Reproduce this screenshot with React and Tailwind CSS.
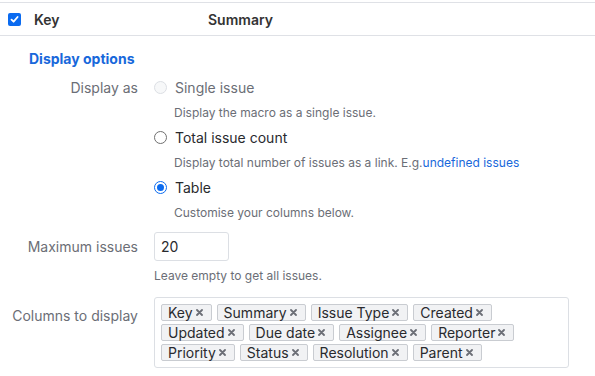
import React from "react";

const X = () => (
  <svg width="7" height="7" viewBox="0 0 7 7" className="ml-[3px] shrink-0">
    <path d="M1 1L6 6M6 1L1 6" stroke="#6b6e76" strokeWidth="1.8" strokeLinecap="round" />
  </svg>
);

const Tag = ({ children }) => (
  <span className="h-[17px] flex items-center pl-[6px] pr-[8px] bg-[#f1f2f4] border border-[#c9ccd1] rounded-[2px] text-[14px] leading-none text-[#292a2e]">
    {children}
    <X />
  </span>
);

const Radio = ({ state }) => {
  if (state === "disabled")
    return <span className="w-[13px] h-[13px] rounded-full border border-[#dcdfe4] bg-[#f7f8f9] shrink-0" />;
  if (state === "checked")
    return (
      <span className="w-[13px] h-[13px] rounded-full border-[1.5px] border-[#0b6bf0] bg-white shrink-0 flex items-center justify-center">
        <span className="w-[7px] h-[7px] rounded-full bg-[#0b6bf0]" />
      </span>
    );
  return <span className="w-[13px] h-[13px] rounded-full border-[1.5px] border-[#707070] bg-white shrink-0" />;
};

const Option = ({ state, label, desc, dim }) => (
  <div>
    <div className="h-[25px] flex items-center gap-[8px]">
      <Radio state={state} />
      <span className={"text-[14px] " + (dim ? "text-[#6b6e76]" : "text-[#292a2e]")}>{label}</span>
    </div>
    <div className="h-[25px] flex items-center pl-[20px] text-[12px] text-[#6b6e76]">{desc}</div>
  </div>
);

export default function App() {
  const rows = [
    ["Key", "Summary", "Issue Type", "Created"],
    ["Updated", "Due date", "Assignee", "Reporter"],
    ["Priority", "Status", "Resolution", "Parent"],
  ];
  return (
    <div className="w-[595px] h-[376px] bg-white overflow-hidden font-['Inter',sans-serif]">
      <div className="mt-[2px] h-[34px] border-t border-b border-[#dfe1e6] flex items-center">
        <span className="ml-[8px] w-[13px] h-[13px] rounded-[2px] bg-[#0b6bf0] flex items-center justify-center">
          <svg width="9" height="9" viewBox="0 0 9 9">
            <path d="M1.5 4.6L3.6 6.7L7.6 2" stroke="white" strokeWidth="1.8" fill="none" strokeLinecap="round" strokeLinejoin="round" />
          </svg>
        </span>
        <span className="ml-[13px] w-[174px] text-[14px] font-semibold text-[#333]">Key</span>
        <span className="text-[14px] font-semibold text-[#333]">Summary</span>
      </div>
      <div className="mt-[12px] pl-[29px] h-[20px] flex items-center text-[14px] font-bold text-[#1868db]">
        Display options
      </div>
      <div className="mt-[7px] flex">
        <div className="w-[138px] h-[25px] flex items-center justify-end text-[14px] text-[#6b6e76]">Display as</div>
        <div className="ml-[16px]">
          <Option state="disabled" dim label="Single issue" desc="Display the macro as a single issue." />
          <Option
            label="Total issue count"
            desc={
              <span>
                Display total number of issues as a link. E.g.<span className="text-[#1868db]">undefined issues</span>
              </span>
            }
          />
          <Option state="checked" label="Table" desc="Customise your columns below." />
        </div>
      </div>
      <div className="mt-[7px] flex">
        <div className="w-[138px] h-[29px] flex items-center justify-end text-[14px] text-[#6b6e76]">Maximum issues</div>
        <div className="ml-[16px]">
          <div className="w-[75px] h-[29px] border border-[#dcdfe4] rounded-[3px] flex items-center pl-[6px] text-[14px] text-[#292a2e]">
            20
          </div>
        </div>
      </div>
      <div className="mt-[3px] h-[24px] flex items-center pl-[154px] text-[12px] text-[#6b6e76]">Leave empty to get all issues.</div>
      <div className="mt-[9px] flex">
        <div className="w-[138px] pt-[6px] h-[31px] flex items-center justify-end text-[14px] text-[#6b6e76]">Columns to display</div>
        <div className="ml-[16px] w-[415px] h-[71px] border border-[#dcdfe4] rounded-[3px] px-[6px] py-[6px] flex flex-col gap-[3px]">
          {rows.map((r, i) => (
            <div key={i} className="flex gap-[5px]">
              {r.map((t) => (
                <Tag key={t}>{t}</Tag>
              ))}
            </div>
          ))}
        </div>
      </div>
    </div>
  );
}
